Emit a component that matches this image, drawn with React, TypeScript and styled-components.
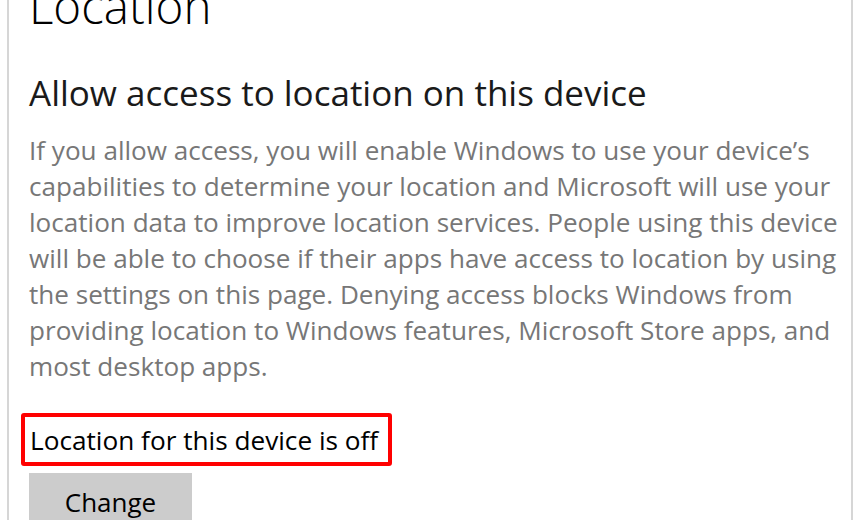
import React from "react";
import styled, { createGlobalStyle } from "styled-components";

const GlobalStyle = createGlobalStyle`
  html, body {
    margin: 0;
    padding: 0;
    background: #ffffff;
    overflow: hidden;
  }
  body {
    font-family: "Open Sans", "Noto Sans", sans-serif;
  }
`;

const Panel = styled.div`
  box-sizing: border-box;
  width: 846px;
  height: 560px;
  margin: -22px 0 0 7px;
  padding: 0 0 0 20px;
  border-left: 2px solid #d6d6d6;
  border-right: 2px solid #d6d6d6;
`;

const Title = styled.h1`
  margin: 0;
  font-size: 47.5px;
  font-weight: 300;
  line-height: 56px;
  color: #000000;
`;

const Heading = styled.h2`
  margin: 36.6px 0 0;
  font-size: 35px;
  font-weight: 400;
  line-height: 44px;
  color: #1a1a1a;
`;

const Description = styled.p`
  margin: 17.5px 0 0;
  font-size: 26.1px;
  line-height: 36px;
  white-space: nowrap;
  color: #777777;
`;

const StatusBox = styled.div`
  display: inline-block;
  margin: 28.9px 0 0 -8px;
  padding: 6px 10px 5px 5px;
  border: 4px solid #ff0000;
  border-radius: 3px;
  font-size: 26.2px;
  line-height: 34px;
  color: #000000;
`;

const ChangeButton = styled.button`
  display: block;
  margin: 7px 0 0 0;
  width: 163px;
  height: 58px;
  border: none;
  background: #cccccc;
  font-family: inherit;
  font-size: 26px;
  color: #000000;
  padding: 0;
`;

const lines = [
  "If you allow access, you will enable Windows to use your device’s",
  "capabilities to determine your location and Microsoft will use your",
  "location data to improve location services. People using this device",
  "will be able to choose if their apps have access to location by using",
  "the settings on this page. Denying access blocks Windows from",
  "providing location to Windows features, Microsoft Store apps, and",
  "most desktop apps.",
];

export default function App() {
  return (
    <>
      <GlobalStyle />
      <Panel>
        <Title>Location</Title>
        <Heading>Allow access to location on this device</Heading>
        <Description>
          {lines.map((line, i) => (
            <React.Fragment key={i}>
              {line}
              {i < lines.length - 1 && <br />}
            </React.Fragment>
          ))}
        </Description>
        <StatusBox>Location for this device is off</StatusBox>
        <ChangeButton>Change</ChangeButton>
      </Panel>
    </>
  );
}
